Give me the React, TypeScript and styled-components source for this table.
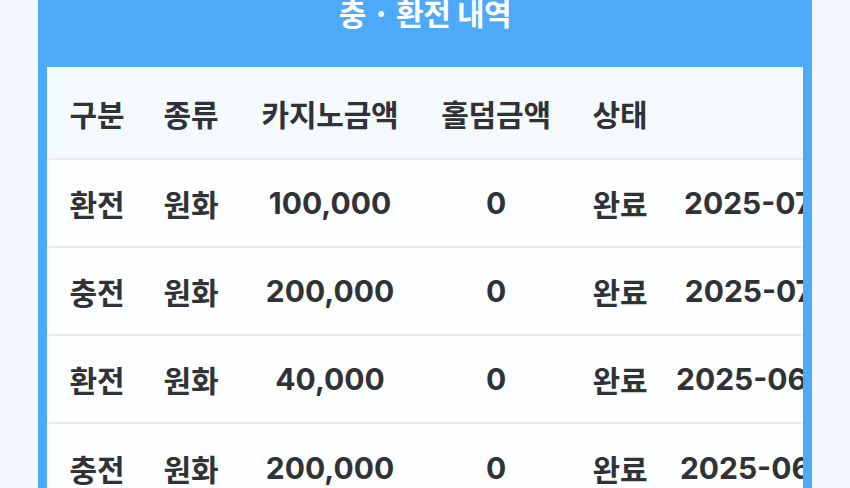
import React from "react";
import styled, { createGlobalStyle } from "styled-components";

const GlobalStyle = createGlobalStyle`
  html, body {
    margin: 0;
    padding: 0;
    background: #f3f6fd;
  }
  body {
    font-family: "Inter", "Noto Sans CJK KR", sans-serif;
    overflow: hidden;
  }
`;

const Page = styled.div`
  width: 850px;
  height: 488px;
  padding: 0 38px;
  box-sizing: border-box;
  overflow: hidden;
`;

const Panel = styled.section`
  background: #4daaf8;
  padding: 0 9px;
  height: 100%;
  box-sizing: border-box;
  display: flex;
  flex-direction: column;
`;

const Title = styled.h2`
  margin: 0;
  height: 67px;
  flex: none;
  display: flex;
  justify-content: center;
  align-items: flex-start;
  color: #ffffff;
  font-family: "Noto Sans CJK KR", sans-serif;
  font-weight: 700;
  font-size: 30px;
  line-height: 25px;
  letter-spacing: -0.4px;
`;

const Scroll = styled.div`
  background: #fcfeff;
  overflow-x: auto;
  overflow-y: hidden;
  flex: 1;
  scrollbar-width: none;
  &::-webkit-scrollbar {
    display: none;
  }
`;

const Table = styled.table`
  border-collapse: collapse;
  table-layout: fixed;
  width: max-content;
`;

const Col = styled.col<{ $w: number }>`
  width: ${(p) => p.$w}px;
`;

const HeadRow = styled.tr`
  background: #f4f9fc;
  height: 92px;
`;

const Row = styled.tr`
  height: 88px;
  border-top: 2px solid #e7eaee;
`;

const Th = styled.th`
  padding: 0;
  text-align: center;
  color: #313235;
  font-weight: 700;
  font-size: 30px;
  letter-spacing: -0.2px;
  white-space: nowrap;
  font-family: "Noto Sans CJK KR", sans-serif;
`;

const Td = styled.td<{ $num?: boolean }>`
  padding: 0;
  text-align: center;
  color: #313235;
  font-weight: 700;
  font-size: 30px;
  white-space: nowrap;
  font-family: ${(p) =>
    p.$num ? `"Inter", "Noto Sans CJK KR", sans-serif` : `"Noto Sans CJK KR", sans-serif`};
`;

const rows = [
  { type: "환전", kind: "원화", casino: "100,000", holdem: "0", status: "완료", date: "2025-07-14 18:22" },
  { type: "충전", kind: "원화", casino: "200,000", holdem: "0", status: "완료", date: "2025-07-14 17:05" },
  { type: "환전", kind: "원화", casino: "40,000", holdem: "0", status: "완료", date: "2025-06-28 20:48" },
  { type: "충전", kind: "원화", casino: "200,000", holdem: "0", status: "완료", date: "2025-06-28 19:36" },
];

const widths = [100, 88, 190, 142, 106, 285];

export default function App() {
  return (
    <>
      <GlobalStyle />
      <Page>
        <Panel>
          <Title>충 · 환전 내역</Title>
          <Scroll>
            <Table>
              <colgroup>
                {widths.map((w, i) => (
                  <Col key={i} $w={w} />
                ))}
              </colgroup>
              <thead>
                <HeadRow>
                  <Th>구분</Th>
                  <Th>종류</Th>
                  <Th>카지노금액</Th>
                  <Th>홀덤금액</Th>
                  <Th>상태</Th>
                  <Th></Th>
                </HeadRow>
              </thead>
              <tbody>
                {rows.map((r, i) => (
                  <Row key={i}>
                    <Td>{r.type}</Td>
                    <Td>{r.kind}</Td>
                    <Td $num>{r.casino}</Td>
                    <Td $num>{r.holdem}</Td>
                    <Td>{r.status}</Td>
                    <Td $num>{r.date}</Td>
                  </Row>
                ))}
              </tbody>
            </Table>
          </Scroll>
        </Panel>
      </Page>
    </>
  );
}
